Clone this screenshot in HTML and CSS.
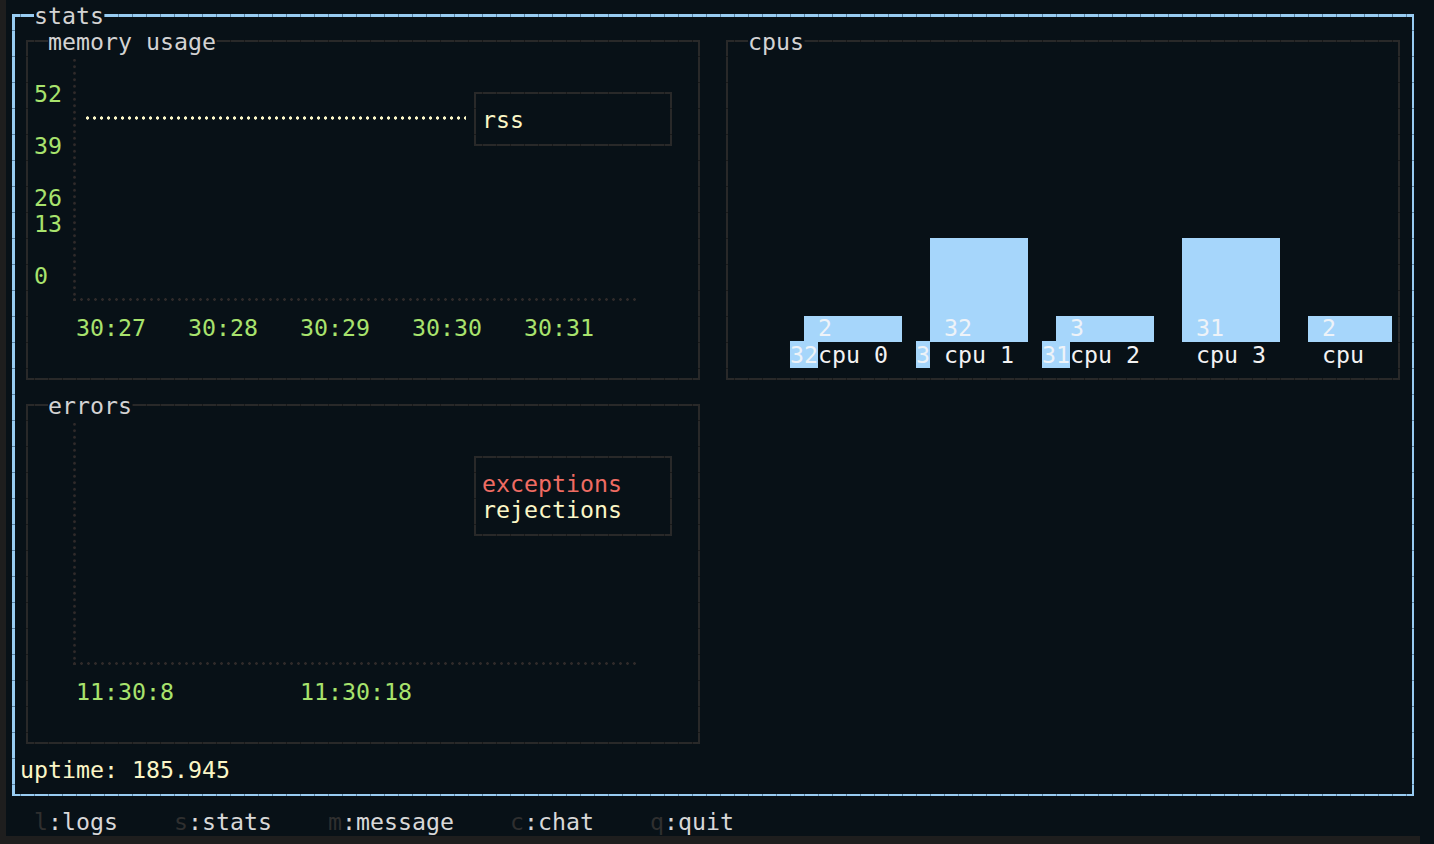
FILE: index.html
```html
<!DOCTYPE html>
<html>
<head>
<meta charset="utf-8">
<link rel="stylesheet" href="styles.css">
</head>
<body>
<div class="app">
  <div class="screen">
    <div class="frame box">
      <span class="title">stats</span>
      <div class="panels">
        <section class="panel box">
          <span class="title">memory usage</span>
          <div class="chart">
            <div class="ylabels">
              <span></span><span>52</span><span></span><span>39</span><span></span><span>26</span><span>13</span><span></span><span>0</span><span></span>
            </div>
            <div class="plot"><div class="series rss-line"></div></div>
          </div>
          <div class="xlabels">30:27   30:28   30:29   30:30   30:31</div>
          <div class="legend box legend-mem">
            <div class="c-cream">rss</div>
          </div>
        </section>
        <section class="panel box">
          <span class="title">cpus</span>
          <div class="bars">
            <div class="bar short"><span>2</span></div>
            <div class="bar tall"><span>32</span></div>
            <div class="bar short"><span>3</span></div>
            <div class="bar tall"><span>31</span></div>
            <div class="bar short clip"><span>2</span></div>
          </div>
          <div class="bar-labels"><span class="hl">32</span>cpu 0  <span class="hl">3</span> cpu 1  <span class="hl">31</span>cpu 2    cpu 3    cpu</div>
        </section>
        <section class="panel box">
          <span class="title">errors</span>
          <div class="chart">
            <div class="ylabels"></div>
            <div class="plot"></div>
          </div>
          <div class="xlabels">11:30:8         11:30:18</div>
          <div class="legend box legend-err">
            <div class="c-red">exceptions</div>
            <div class="c-cream">rejections</div>
          </div>
        </section>
      </div>
      <div class="uptime">uptime: 185.945</div>
    </div>
  </div>
  <div class="statusbar">
    <span><span class="key">l</span>:logs</span>
    <span><span class="key">s</span>:stats</span>
    <span><span class="key">m</span>:message</span>
    <span><span class="key">c</span>:chat</span>
    <span><span class="key">q</span>:quit</span>
  </div>
  <div class="strip"></div>
</div>
</body>
</html>
```
FILE: styles.css
```css
:root {
  --bg: #081117;
  --axis: #2f2a2a;
  --green: #a8e36d;
  --cream: #fbf6c6;
  --barblue: #a6d6fb;
}

* { box-sizing: border-box; }

html, body {
  margin: 0;
  padding: 0;
}

body {
  background: var(--bg);
  font-family: "DejaVu Sans Mono", "Liberation Mono", monospace;
  font-size: 23.254px;
  line-height: 26px;
  color: #d3d3d3;
  width: 1434px;
  height: 844px;
  overflow: hidden;
}

.app {
  width: 1420px;
  height: 844px;
  border-left: 6px solid #1e1e1e;
  padding-top: 3px;
  display: flex;
  flex-direction: column;
}

.screen {
  height: 806px;
  padding: 11px 0 0 6px;
  flex: none;
}

/* boxes drawn with dashed "line-drawing" edges */
.box {
  --line: #292929;
  --gap: #1a1a1a;
  --w: 2px;
  position: relative;
  background:
    linear-gradient(90deg, var(--gap) 0 1px, var(--line) 1px) 8px 0 / 14px var(--w) repeat-x,
    linear-gradient(90deg, var(--gap) 0 1px, var(--line) 1px) 8px 100% / 14px var(--w) repeat-x,
    linear-gradient(180deg, var(--gap) 0 1px, var(--line) 1px) 0 16px / var(--w) 26px repeat-y,
    linear-gradient(180deg, var(--gap) 0 1px, var(--line) 1px) 100% 16px / var(--w) 26px repeat-y,
    var(--bg);
}

.frame {
  --line: #98ccf2;
  --gap: #5b83a3;
  --w: 2.5px;
  width: 1402px;
  height: 782px;
  padding: 26px 14px 0 14px;
}

.title {
  position: absolute;
  top: -11px;
  left: 22px;
  background: var(--bg);
  color: #d3d3d3;
  white-space: pre;
}

.panels {
  display: grid;
  grid-template-columns: 674px 674px;
  grid-template-rows: 340px 340px;
  column-gap: 26px;
  row-gap: 24px;
}

.panel {
  padding: 15px 8px 0 8px;
}

/* line charts */
.chart {
  display: grid;
  grid-template-columns: 28px 574px;
  height: 260px;
}

.ylabels {
  display: flex;
  flex-direction: column;
  color: var(--green);
}

.ylabels span {
  display: block;
  height: 26px;
}

.plot {
  margin: 4px 0 0 11px;
  width: 563px;
  height: 242px;
  background:
    radial-gradient(circle, var(--axis) 1.1px, transparent 1.6px) 0 -2px / 3px 6.5px repeat-y,
    radial-gradient(circle, var(--axis) 1.1px, transparent 1.6px) -2px 100% / 7px 3px repeat-x;
}

.series {
  height: 4px;
}

.rss-line {
  margin: 57px 0 0 11px;
  width: 382px;
  background: radial-gradient(circle, var(--cream) 1.4px, transparent 1.9px) 0 0 / 7px 4px repeat-x;
}

.xlabels {
  white-space: pre;
  padding-left: 42px;
  color: var(--green);
}

.legend {
  position: absolute;
  left: 448px;
  top: 52px;
  width: 198px;
  padding: 15px 0 0 8px;
}

.legend-mem { height: 54px; }
.legend-err { height: 80px; }

.c-cream { color: var(--cream); }
.c-red { color: #ef6c63; }

/* cpu bar chart */
.bars {
  display: flex;
  align-items: flex-end;
  gap: 28px;
  padding-left: 70px;
  height: 287px;
}

.bar {
  width: 98px;
  flex: none;
  background: var(--barblue);
  color: #eef3f8;
  padding-left: 14px;
  display: flex;
  align-items: flex-end;
}

.bar span {
  margin-bottom: 1px;
}

.bar.short { height: 26px; }
.bar.tall { height: 104px; }
.bar.clip { width: 84px; }

.bar-labels {
  white-space: pre;
  padding-left: 56px;
  color: #f2f2f2;
}

.hl {
  background: var(--barblue);
  color: #eef3f8;
}

.uptime {
  margin: 13px 0 0 -6px;
  color: var(--cream);
  white-space: pre;
}

/* bottom key bar */
.statusbar {
  height: 27px;
  flex: none;
  padding-left: 28px;
  display: flex;
  gap: 56px;
  color: #d8d8d8;
  white-space: pre;
}

.key { color: #2f2f2f; }

.strip {
  height: 8px;
  flex: none;
  background: #1e1e1e;
}
```
